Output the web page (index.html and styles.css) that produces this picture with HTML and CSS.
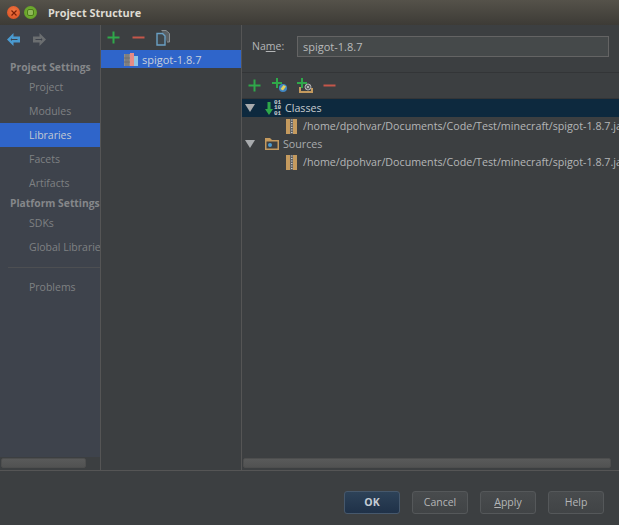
FILE: index.html
```html
<!DOCTYPE html>
<html lang="en">
<head>
<meta charset="utf-8">
<title>Project Structure</title>
<link rel="stylesheet" href="styles.css">
</head>
<body>
<div class="window">
  <header class="titlebar">
    <span class="wbtn close"><svg width="8" height="8" viewBox="0 0 8 8"><path d="M1.5 1.5l5 5M6.5 1.5l-5 5" stroke="#7a1f08" stroke-width="1.2"/></svg></span>
    <span class="wbtn max"><span class="maxin"></span></span>
    <span class="wtitle">Project Structure</span>
  </header>
  <div class="main">
    <aside class="sidebar">
      <div class="sidebody">
        <div class="navicons">
          <svg width="13" height="13" viewBox="0 0 13 13"><path d="M0 6.5L6.5 0V3.5H13V9.5H6.5V13Z" fill="#4a9ad0"/><path d="M3.5 6.5L5 5V6H10.5V7H5V8Z" fill="#3e434c"/></svg>
          <svg width="13" height="13" viewBox="0 0 13 13"><path d="M13 6.5L6.5 0V3.5H0V9.5H6.5V13Z" fill="#6b6e70"/><path d="M9.5 6.5L8 5V6H2.5V7H8V8Z" fill="#3e434c"/></svg>
        </div>
        <div class="head">Project Settings</div>
        <div class="item">Project</div>
        <div class="item">Modules</div>
        <div class="item sel">Libraries</div>
        <div class="item">Facets</div>
        <div class="item">Artifacts</div>
        <div class="head second">Platform Settings</div>
        <div class="item">SDKs</div>
        <div class="item">Global Libraries</div>
        <div class="sep"></div>
        <div class="item">Problems</div>
      </div>
      <div class="hscroll"><div class="thumb left"></div></div>
    </aside>
    <section class="libs">
      <div class="tools">
        <svg width="13" height="13" viewBox="0 0 13 13"><path d="M6.5 0.5v12M0.5 6.5h12" stroke="#2fa84a" stroke-width="2"/></svg>
        <svg width="13" height="13" viewBox="0 0 13 13"><path d="M0.5 6.5h12" stroke="#c4574a" stroke-width="2"/></svg>
        <svg class="copy" width="15" height="16" viewBox="0 0 15 16"><path d="M5.5 0.5H10L13.5 3.5V12H11" fill="#5b6064" stroke="#8a8f92"/><path d="M1 3.5H6.5L9 6V15H1Z" fill="#3f464b" stroke="#6aa0c4" stroke-width="1.4"/></svg>
      </div>
      <div class="librow">
        <svg width="14" height="13" viewBox="0 0 14 13"><rect x="0" y="1" width="6" height="12" fill="#8d8d8d"/><path d="M2 1v12M4 1v12M0 5h6M0 9h6" stroke="#6b6b6b" stroke-width=".8"/><rect x="6" y="0" width="4" height="13" fill="#e58b86"/><rect x="10" y="3" width="4" height="10" fill="#8fc4e4"/></svg>
        <span>spigot-1.8.7</span>
      </div>
      <div class="spacer"></div>
      <div class="hscroll"></div>
    </section>
    <section class="detail">
      <div class="namerow">
        <label class="namelabel">Na<u>m</u>e:</label>
        <div class="nameinput">spigot-1.8.7</div>
      </div>
      <div class="tools2">
        <svg class="t1" width="13" height="13" viewBox="0 0 13 13"><path d="M6.5 0.5v12M0.5 6.5h12" stroke="#2fa84a" stroke-width="2"/></svg>
        <svg class="t2" width="18" height="16" viewBox="0 0 18 16"><path d="M5 0v10M0 5h10" stroke="#2fa84a" stroke-width="2"/><circle cx="11" cy="10" r="4" fill="#3f86c4"/><path d="M8.5 11l3-4 2.5 1.5-3 4z" fill="#e6cf5a"/></svg>
        <svg class="t3" width="18" height="16" viewBox="0 0 18 16"><path d="M5 0v10M0 5h10" stroke="#2fa84a" stroke-width="2"/><path d="M3 9v5h12v-4" fill="none" stroke="#c49a5e" stroke-width="2"/><circle cx="11" cy="9" r="3" fill="#55585a" stroke="#b0b0b0"/><path d="M9.6 7.6l2.8 2.8M12.4 7.6l-2.8 2.8" stroke="#ccc" stroke-width=".8"/></svg>
        <svg class="t4" width="13" height="13" viewBox="0 0 13 13"><path d="M0.5 6.5h12" stroke="#c4574a" stroke-width="2"/></svg>
      </div>
      <div class="tree">
        <div class="row active">
          <span class="tri"></span>
          <svg class="ric" width="8" height="13" viewBox="0 0 8 13"><path d="M2.5 0h3v7H8L4 13 0 7h2.5Z" fill="#2fa84a"/></svg>
          <span class="bits">01<br>10<br>01</span>
          <span class="rtext">Classes</span>
        </div>
        <div class="row child">
          <svg class="jar" width="11" height="15" viewBox="0 0 11 15"><rect width="4" height="15" fill="#c49a5e"/><rect x="7" width="4" height="15" fill="#c49a5e"/><path d="M4 0h3v15H4z" fill="#5f6163"/><path d="M5 1h1.5M5 3.5h1.5M5 6h1.5M5 8.5h1.5M5 11h1.5M5 13.5h1.5" stroke="#c8c8c8"/></svg>
          <span class="rtext">/home/dpohvar/Documents/Code/Test/minecraft/spigot-1.8.7.jar</span>
        </div>
        <div class="row">
          <span class="tri"></span>
          <svg class="ric" width="14" height="12" viewBox="0 0 14 12"><path d="M0 12V0H5L7 2H14V12Z" fill="#c49a5e"/><rect x="1.5" y="3.5" width="11" height="7" fill="#3c3f41"/><circle cx="5" cy="7" r="2" fill="#4a9ad0"/></svg>
          <span class="rtext src">Sources</span>
        </div>
        <div class="row child">
          <svg class="jar" width="11" height="15" viewBox="0 0 11 15"><rect width="4" height="15" fill="#c49a5e"/><rect x="7" width="4" height="15" fill="#c49a5e"/><path d="M4 0h3v15H4z" fill="#5f6163"/><path d="M5 1h1.5M5 3.5h1.5M5 6h1.5M5 8.5h1.5M5 11h1.5M5 13.5h1.5" stroke="#c8c8c8"/></svg>
          <span class="rtext">/home/dpohvar/Documents/Code/Test/minecraft/spigot-1.8.7.jar</span>
        </div>
      </div>
      <div class="hscroll"><div class="thumb right"></div></div>
    </section>
  </div>
  <footer class="footer">
    <button class="btn ok">OK</button>
    <button class="btn">Cancel</button>
    <button class="btn"><span><u>A</u>pply</span></button>
    <button class="btn">Help</button>
  </footer>
</div>
</body>
</html>
```

FILE: styles.css
```css
* { box-sizing: border-box; }
html, body { margin: 0; padding: 0; }
body { width: 619px; height: 525px; overflow: hidden; background: #3c3f41; font-family: "Open Sans", "Noto Sans", sans-serif; font-size: 11px; color: #bbb; }
.window { width: 619px; height: 525px; display: flex; flex-direction: column; }

.titlebar { height: 25px; flex: none; display: flex; align-items: center; padding: 0 0 0 7px; background: linear-gradient(#55524a, #3d3b36); }
.wbtn { width: 13px; height: 13px; border-radius: 50%; display: flex; align-items: center; justify-content: center; }
.close { background: radial-gradient(circle at 50% 40%, #f07a45, #d8481c); }
.max { margin-left: 4px; background: radial-gradient(circle, #7db83a, #5d9a22); }
.maxin { width: 7px; height: 7px; border-radius: 2px; background: #8fb85a; border: 1px solid #4c7a18; }
.wtitle { margin-left: 11px; font-weight: 700; font-size: 10.9px; color: #dfdbd2; }

.main { height: 446px; flex: none; display: flex; border-bottom: 1px solid #555; }
.sidebar { width: 101px; flex: none; display: flex; flex-direction: column; border-right: 1px solid #555; }
.sidebody { flex: 1; background: #3e434c; overflow: hidden; }
.navicons { height: 32px; display: flex; align-items: flex-start; gap: 13px; padding: 8px 0 0 7px; }
.head { height: 18px; line-height: 20px; padding-left: 10px; font-weight: 700; font-size: 10.3px; color: #85878a; white-space: nowrap; overflow: hidden; }
.head.second { height: 16px; line-height: 16px; }
.item { height: 24px; line-height: 24px; padding-left: 29px; color: #7f8183; white-space: nowrap; overflow: hidden; font-size: 10.5px; }
.item.sel { background: #2f65ca; color: #c3c9d2; }
.sep { height: 1px; margin: 8px 0 7px 8px; background: #4d4f52; }

.hscroll { height: 13px; flex: none; background: #3c3f41; padding: 1px 0 2px 1px; display: flex; }
.thumb { height: 10px; border-radius: 2px; background: linear-gradient(#595a5a, #515252); border: 1px solid #4d4e4e; }
.thumb.left { width: 85px; }
.thumb.right { width: 368px; }

.libs { width: 141px; flex: none; display: flex; flex-direction: column; border-right: 1px solid #555; }
.tools { height: 25px; display: flex; align-items: center; gap: 12px; padding-left: 6px; }
.copy { margin-left: -1px; }
.librow { height: 18px; background: #2f65ca; display: flex; align-items: center; gap: 4px; padding-left: 23px; color: #c8d0dc; font-size: 11px; }
.spacer { flex: 1; }

.detail { flex: 1; min-width: 0; display: flex; flex-direction: column; overflow: hidden; }
.namerow { height: 48px; flex: none; display: flex; align-items: flex-start; padding: 11px 10px 0 10px; border-bottom: 1px solid #333537; }
.namelabel { width: 45px; line-height: 21px; color: #b4b6b7; font-size: 10.5px; }
.nameinput { flex: 1; height: 21px; line-height: 19px; padding-left: 5px; background: #45494a; border: 1px solid #646464; color: #b8babb; font-size: 11px; }
.tools2 { height: 26px; flex: none; display: flex; align-items: center; padding-left: 6px; border-bottom: 1px solid #333537; }
.t1, .t2, .t3, .t4 { flex: none; }
.t2 { margin-left: 11px; }
.t3 { margin-left: 7px; }
.t4 { margin-left: 8px; }
.tree { flex: 1; min-height: 0; }
.row { height: 18px; display: flex; align-items: center; white-space: nowrap; }
.row.active { background: #0d293e; color: #c8ccd0; }
.row.child { padding-left: 44px; gap: 6px; }
.jar { flex: none; }
.tri { width: 0; height: 0; margin-left: 3px; border-left: 5px solid transparent; border-right: 5px solid transparent; border-top: 8px solid #a8abad; flex: none; }
.ric { margin-left: 10px; flex: none; }
.bits { font-family: "Liberation Mono", monospace; font-size: 6px; line-height: 5.5px; width: 7px; margin-left: 1px; color: #cfd3d6; font-weight: 700; flex: none; }
.rtext { font-size: 10.7px; margin-left: 4px; color: inherit; }
.child .rtext { margin-left: 0; color: #b4b6b7; }
.src { color: #a9abad; }

.footer { flex: 1; display: flex; justify-content: flex-end; align-items: flex-start; gap: 12px; padding: 20px 15px 0 0; }
.btn { width: 56px; height: 23px; padding: 0 0 1px; border-radius: 3px; border: 1px solid #55585a; background: linear-gradient(#484b4d, #414446); color: #b4b6b7; font-family: "Open Sans", sans-serif; font-size: 10.5px; }
.btn.ok { background: linear-gradient(#2d4258, #1f3148); border-color: #46586c; color: #c4ccd4; font-weight: 700; }
```
